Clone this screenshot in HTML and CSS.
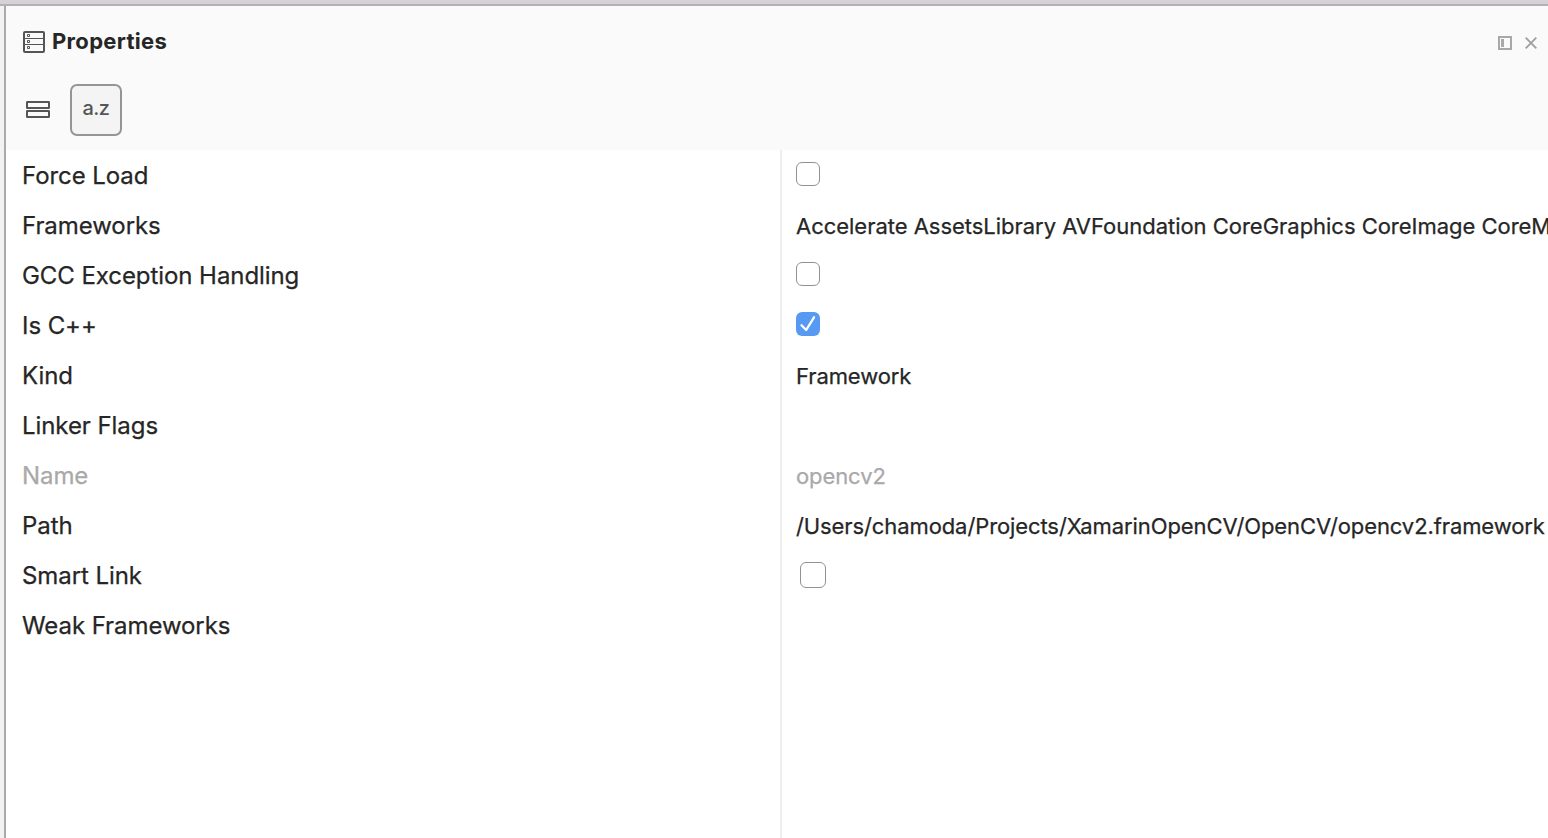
FILE: index.html
```html
<!DOCTYPE html>
<html lang="en">
<head>
<meta charset="utf-8">
<title>Properties</title>
<link rel="stylesheet" href="styles.css">
</head>
<body>
<div class="window-edge"></div>
<div class="workspace">
  <div class="splitter"></div>
  <main class="pad">
    <header class="pad-header">
      <div class="title-bar">
        <svg class="pad-icon" width="22" height="22" viewBox="0 0 22 22" fill="none" stroke="#555">
          <rect x="1" y="1" width="20" height="20" rx="1" stroke-width="2"/>
          <path d="M2 7.5h18M2 13.5h18" stroke-width="1"/>
          <path d="M4.5 3.5h2v2h-2zM4.5 9.5h2v2h-2zM4.5 15.5h2v2h-2z" stroke-width="1"/>
        </svg>
        <h1 class="title">Properties</h1>
        <div class="controls">
          <svg width="14" height="14" viewBox="0 0 14 14"><path d="M1 1h12v12H1z" fill="none" stroke="#a8a8a8" stroke-width="2"/><path d="M3 3h3v8H3z" fill="#a8a8a8"/></svg>
          <svg width="12" height="12" viewBox="0 0 12 12"><path d="M.7.7l10.6 10.6M11.3.7L.7 11.3" fill="none" stroke="#a0a0a0" stroke-width="1.9"/></svg>
        </div>
      </div>
      <div class="toolbar">
        <svg class="category" width="24" height="18" viewBox="0 0 24 18" fill="none" stroke="#555" stroke-width="2"><rect x="1" y="1" width="22" height="6" rx=".3"/><rect x="1" y="10" width="22" height="6" rx=".3"/></svg>
        <button class="sort">a.z</button>
      </div>
    </header>
    <section class="grid">
      <div class="names">
        <div class="row"><span>Force Load</span></div>
        <div class="row"><span>Frameworks</span></div>
        <div class="row"><span>GCC Exception Handling</span></div>
        <div class="row"><span>Is C++</span></div>
        <div class="row"><span>Kind</span></div>
        <div class="row"><span>Linker Flags</span></div>
        <div class="row disabled"><span>Name</span></div>
        <div class="row"><span>Path</span></div>
        <div class="row"><span>Smart Link</span></div>
        <div class="row"><span>Weak Frameworks</span></div>
      </div>
      <div class="values">
        <div class="row"><i class="check"></i></div>
        <div class="row"><span class="frameworks">Accelerate AssetsLibrary AVFoundation CoreGraphics CoreImage CoreM</span></div>
        <div class="row"><i class="check"></i></div>
        <div class="row"><i class="check checked"><svg width="24" height="24" viewBox="0 0 24 24"><path d="M5.5 13.2l4.7 4.8 7.8-12.7" fill="none" stroke="#fff" stroke-width="2.3" stroke-linecap="round" stroke-linejoin="round"/></svg></i></div>
        <div class="row"><span>Framework</span></div>
        <div class="row"></div>
        <div class="row disabled"><span>opencv2</span></div>
        <div class="row"><span class="path">/Users/chamoda/Projects/XamarinOpenCV/OpenCV/opencv2.framework</span></div>
        <div class="row"><i class="check editing"></i></div>
        <div class="row"></div>
      </div>
    </section>
  </main>
</div>
</body>
</html>
```
FILE: styles.css
```css
* { box-sizing: border-box; }
body { margin: 0; height: 838px; overflow: hidden; display: flex; flex-direction: column; background: #fff; color: #262626; font-family: Inter, sans-serif; }
.window-edge { height: 6px; flex: none; background: #d4d2d4; border-bottom: 2px solid #b3b1b3; }
.workspace { flex: 1; display: flex; min-height: 0; }
.splitter { width: 6px; flex: none; background: #f3f2f3; border-right: 2px solid #aaa; }
.pad { flex: 1; min-width: 0; display: flex; flex-direction: column; }
.pad-header { height: 144px; flex: none; background: #fafafa; }
.title-bar { height: 72px; padding: 0 11px 0 17px; display: flex; align-items: center; }
.title { margin: 0 0 2px 7px; font-size: 22px; line-height: 28px; font-weight: 700; letter-spacing: .32px; }
.controls { margin-left: auto; margin-top: 2px; display: flex; align-items: center; gap: 13px; }
.toolbar { padding: 6px 0 0 20px; display: flex; align-items: center; gap: 20px; }
.sort { width: 52px; height: 52px; padding: 0 0 4px; border: 2px solid #959595; border-radius: 7px; background: #f4f4f4; color: #555; font: 500 20px/24px Inter, sans-serif; letter-spacing: -.6px; }
.grid { flex: 1; display: flex; min-height: 0; }
.names { width: 774px; flex: none; padding-left: 16px; font-size: 24px; letter-spacing: -.07px; -webkit-text-stroke: .25px currentColor; }
.values { flex: 1; min-width: 0; overflow: hidden; border-left: 2px solid #eee; padding-left: 14px; font-size: 22px; letter-spacing: -.1px; -webkit-text-stroke: .25px currentColor; }
.frameworks { letter-spacing: -.025px; }
.row { height: 50px; display: flex; align-items: center; white-space: nowrap; line-height: 30px; padding-top: 2px; }
.disabled { color: #a9a9a9; }
.check { width: 24px; height: 24px; margin-bottom: 4px; border: 1px solid #929292; border-radius: 6px; background: #fff; }
.checked { border: 0; background: #579af4; }
.checked svg { display: block; }
.editing { width: 26px; height: 26px; margin: 0 0 2px 4px; }
```
